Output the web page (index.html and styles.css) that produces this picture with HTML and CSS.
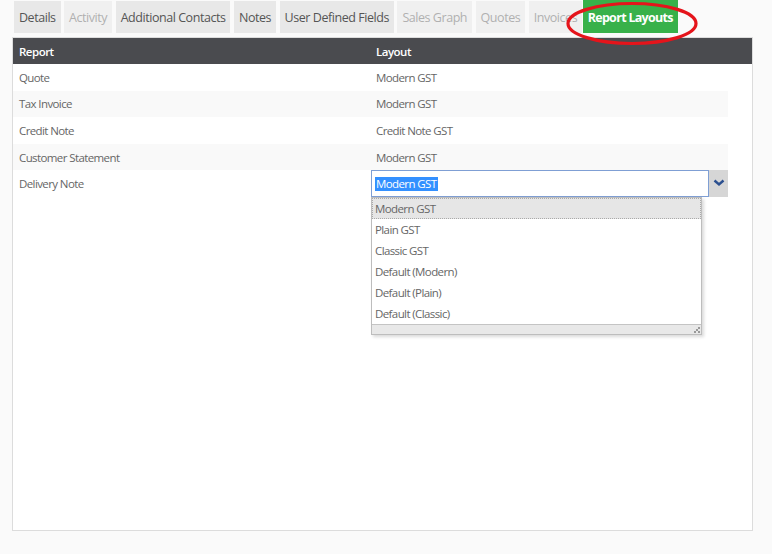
FILE: index.html
```html
<!DOCTYPE html>
<html>
<head>
<meta charset="utf-8">
<link rel="stylesheet" href="styles.css">
</head>
<body>
<div class="page">
  <div class="tabs">
    <div class="tab">Details</div>
    <div class="tab off">Activity</div>
    <div class="tab">Additional Contacts</div>
    <div class="tab">Notes</div>
    <div class="tab">User Defined Fields</div>
    <div class="tab off">Sales Graph</div>
    <div class="tab off">Quotes</div>
    <div class="tab off">Invoices</div>
    <div class="tab active">Report Layouts
      <svg class="circle" width="134" height="46" viewBox="0 0 134 46"><ellipse cx="66" cy="22.5" rx="64" ry="20" fill="none" stroke="#e5141b" stroke-width="3.2"/></svg>
    </div>
  </div>
  <div class="panel">
    <div class="head">
      <div class="c1">Report</div>
      <div class="c2">Layout</div>
    </div>
    <div class="rows">
      <div class="row"><div class="c1">Quote</div><div class="c2">Modern GST</div></div>
      <div class="row alt"><div class="c1">Tax Invoice</div><div class="c2">Modern GST</div></div>
      <div class="row"><div class="c1">Credit Note</div><div class="c2">Credit Note GST</div></div>
      <div class="row alt"><div class="c1">Customer Statement</div><div class="c2">Modern GST</div></div>
      <div class="row"><div class="c1">Delivery Note</div>
        <div class="c2 editcell">
          <div class="combo">
            <div class="input"><span class="sel">Modern GST</span></div>
            <div class="btn"><svg width="12" height="8" viewBox="0 0 12 8"><path d="M1.5 1.5 L6 5.5 L10.5 1.5" fill="none" stroke="#2b4f8f" stroke-width="2.4"/></svg></div>
          </div>
          <div class="list">
            <div class="opt cur">Modern GST</div>
            <div class="opt">Plain GST</div>
            <div class="opt">Classic GST</div>
            <div class="opt">Default (Modern)</div>
            <div class="opt">Default (Plain)</div>
            <div class="opt">Default (Classic)</div>
            <div class="grip"><svg width="7" height="7" viewBox="0 0 7 7"><rect x="5" y="1" width="2" height="2" fill="#999"/><rect x="3" y="3" width="2" height="2" fill="#999"/><rect x="5" y="5" width="2" height="2" fill="#999"/><rect x="1" y="5" width="2" height="2" fill="#999"/></svg></div>
          </div>
        </div>
      </div>
    </div>
  </div>
</div>
</body>
</html>
```
FILE: styles.css
```css
html, body {
  margin: 0;
  padding: 0;
  background: #fafafa;
  font-family: "Open Sans", "Liberation Sans", sans-serif;
}
.page {
  width: 772px;
  height: 554px;
  padding: 1px 0 0 12px;
  box-sizing: border-box;
}
.tabs {
  display: flex;
  gap: 3.5px;
  padding-left: 2px;
  height: 32px;
}
.tab {
  background: #e8e8e8;
  color: #555;
  font-size: 12.5px;
  letter-spacing: -0.45px;
  line-height: 33px;
  padding: 0 5px;
  position: relative;
  white-space: nowrap;
}
.tab.off {
  background: #f0f0f0;
  color: #b0b0b0;
}
.tab.active {
  background: #38b14a;
  color: #fff;
  font-weight: 700;
  letter-spacing: -0.7px;
  padding: 0 5px;
  margin-left: -3px;
  height: 33px;
  margin-top: -1px;
  line-height: 35px;
}
.circle {
  position: absolute;
  left: -17px;
  top: 1px;
  z-index: 2;
}
.panel {
  margin-top: 4px;
  width: 741px;
  height: 494px;
  box-sizing: border-box;
  background: #fff;
  border: 1px solid #dcdcdc;
}
.head {
  display: flex;
  background: #4a4b4f;
  color: #fff;
  font-size: 11.5px;
  font-weight: 600;
  letter-spacing: -0.5px;
  height: 26px;
  align-items: center;
}
.c1 {
  width: 358px;
  box-sizing: border-box;
  padding-left: 6px;
}
.c2 {
  padding-left: 5px;
  flex: 1;
}
.rows {
  width: 715px;
}
.row {
  display: flex;
  align-items: center;
  height: 26.6px;
  font-size: 11.5px;
  letter-spacing: -0.6px;
  color: #666;
}
.row.alt {
  background: #f9f9f9;
}
.editcell {
  padding-left: 0;
  position: relative;
  align-self: stretch;
}
.combo {
  display: flex;
  height: 27px;
}
.input {
  flex: 1;
  border: 1px solid #7f9fd4;
  background: #fff;
  padding-left: 3px;
  display: flex;
  align-items: center;
}
.sel {
  background: #3390ff;
  color: #fff;
  line-height: 14px;
  padding: 0 1px;
}
.btn {
  width: 19px;
  background: #d6d6d6;
  display: flex;
  justify-content: center;
  padding-top: 9px;
  box-sizing: border-box;
}
.list {
  position: absolute;
  left: 0;
  top: 27px;
  width: 331px;
  background: #fff;
  border: 1px solid #bdbdbd;
  box-sizing: border-box;
  box-shadow: 2px 2px 3px rgba(0,0,0,0.15);
}
.opt {
  height: 21px;
  line-height: 21px;
  padding-left: 3px;
  color: #666;
  box-sizing: border-box;
}
.opt.cur {
  background: #e6e6e6;
  border: 1px dotted #aaa;
  padding-left: 2px;
  line-height: 19px;
}
.grip {
  height: 10px;
  box-sizing: border-box;
  background: #e8e8e8;
  border-top: 1px solid #c4c4c4;
  display: flex;
  justify-content: flex-end;
  align-items: flex-end;
  padding: 0 1px 1px 0;
}
```
